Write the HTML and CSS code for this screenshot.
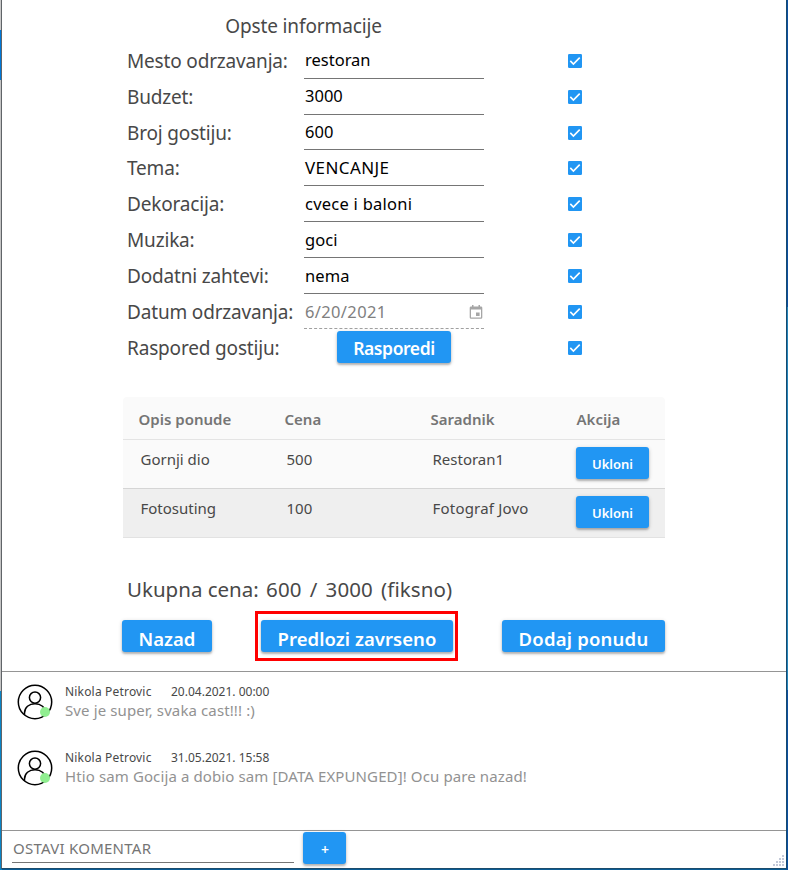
FILE: index.html
```html
<!DOCTYPE html>
<html lang="sr">
<head>
<meta charset="utf-8">
<title>Opste informacije</title>
<link rel="stylesheet" href="styles.css">
</head>
<body>
<svg class="defs" width="0" height="0">
  <symbol id="check" viewBox="0 0 14 14"><rect width="14" height="14" rx="1.2" fill="#2196f3"/><path d="M2.3 6.9 5.4 10 11.7 3.6" fill="none" stroke="#fff" stroke-width="1.6"/></symbol>
  <symbol id="person" viewBox="0 0 36 36"><g fill="none" stroke="#000" stroke-width="1.5"><circle cx="18" cy="18" r="16.7"/><circle cx="18" cy="13.6" r="5.600"/><path d="M7.500 30.800V29C7.500 23.500 12 19.700 18 19.700S28.500 23.500 28.500 29V30.800"/></g><circle cx="28" cy="28" r="5" fill="#90ee90"/></symbol>
</svg>
<div class="window">
  <section class="info">
    <h1 class="title">Opste informacije</h1>
    <div class="row"><label>Mesto odrzavanja:</label><span class="field">restoran</span><svg class="check"><use href="#check"/></svg></div>
    <div class="row"><label>Budzet:</label><span class="field">3000</span><svg class="check"><use href="#check"/></svg></div>
    <div class="row"><label>Broj gostiju:</label><span class="field">600</span><svg class="check"><use href="#check"/></svg></div>
    <div class="row"><label>Tema:</label><span class="field caps">VENCANJE</span><svg class="check"><use href="#check"/></svg></div>
    <div class="row"><label>Dekoracija:</label><span class="field decoration">cvece i baloni</span><svg class="check"><use href="#check"/></svg></div>
    <div class="row"><label>Muzika:</label><span class="field lower">goci</span><svg class="check"><use href="#check"/></svg></div>
    <div class="row"><label>Dodatni zahtevi:</label><span class="field lower">nema</span><svg class="check"><use href="#check"/></svg></div>
    <div class="row"><label>Datum odrzavanja:</label><span class="field date">6/20/2021<svg class="calendar" viewBox="0 0 14 14"><path fill="#a6a6a6" fill-rule="evenodd" d="M3 0h1.500v1.400h5V0H11v1.400h1q1.300 0 1.300 1.300v9.800q0 1.300-1.300 1.300H2Q.7 13.800.7 12.500V2.700Q.7 1.400 2 1.400h1zM2 4.600v7.900h10V4.600zM7 7.400h3.600V11H7z"/></svg></span><svg class="check"><use href="#check"/></svg></div>
    <div class="row"><label>Raspored gostiju:</label><button class="btn arrange">Rasporedi</button><svg class="check"><use href="#check"/></svg></div>
  </section>
  <section class="offers">
    <div class="offer head"><span>Opis ponude</span><span>Cena</span><span>Saradnik</span><span>Akcija</span></div>
    <div class="offer"><span>Gornji dio</span><span>500</span><span>Restoran1</span><button class="btn small">Ukloni</button></div>
    <div class="offer alt"><span>Fotosuting</span><span>100</span><span class="photographer">Fotograf Jovo</span><button class="btn small">Ukloni</button></div>
  </section>
  <p class="total">Ukupna cena: <span class="sum">600 / 3000 (fiksno)</span></p>
  <div class="actions">
    <button class="btn back">Nazad</button>
    <div class="highlight"><button class="btn">Predlozi zavrseno</button></div>
    <button class="btn add">Dodaj ponudu</button>
  </div>
  <section class="comments">
    <article class="comment"><svg class="avatar"><use href="#person"/></svg><div><div class="meta"><span class="name">Nikola Petrovic</span><span>20.04.2021. 00:00</span></div><p>Sve je super, svaka cast!!! :)</p></div></article>
    <article class="comment"><svg class="avatar"><use href="#person"/></svg><div><div class="meta"><span class="name">Nikola Petrovic</span><span>31.05.2021. 15:58</span></div><p>Htio sam Gocija a dobio sam [DATA EXPUNGED]! Ocu pare nazad!</p></div></article>
  </section>
  <footer class="reply"><span class="prompt">OSTAVI KOMENTAR</span><button class="btn plus">+</button>
    <svg class="grip" viewBox="0 0 12 12"><path fill="#c3c9d8" d="M9 0h2v2H9zM6 3h2v2H6zM9 3h2v2H9zM3 6h2v2H3zM6 6h2v2H6zM9 6h2v2H9zM0 9h2v2H0zM3 9h2v2H3zM6 9h2v2H6zM9 9h2v2H9z"/></svg>
  </footer>
</div>
</body>
</html>
```
FILE: styles.css
```css
* { box-sizing: border-box; }
body {
  margin: 0;
  height: 870px;
  overflow: hidden;
  padding: 0 1px 1px;
  font-family: "Noto Sans", sans-serif;
  color: #484848;
  background:
    linear-gradient(#c9c9c9 0 30px, #0078d7 30px 80px, #c4c4c4 80px 691px, #0a84c6 691px) 0 0 / 2px 870px no-repeat,
    linear-gradient(#0b4fa0 0 307px, #2484b8 307px 690px, #0b4fa0 690px) 100% 0 / 2px 870px no-repeat,
    #0b5c94;
}
.defs { position: absolute; }
h1, p { margin: 0; font-weight: 400; }
.window {
  height: 869px;
  background: #fff;
  border: 1px solid #606468;
  border-top: 0;
  border-right-color: #164a70;
  border-bottom-color: #1c4c6c;
}
.info { padding: 10px 0 0 125px; height: 397px; }
.title { width: 353px; height: 33px; line-height: 33px; font-size: 19px; letter-spacing: -.12px; text-align: center; }
.row { display: grid; grid-template-columns: 177px 264px 14px; grid-template-rows: 100%; height: 35.83px; }
label { font-size: 19px; line-height: 37.500px; letter-spacing: -.17px; white-space: nowrap; }
.field {
  position: relative;
  width: 180px;
  height: 100%;
  padding-left: 1px;
  border-bottom: 1px solid #757575;
  font-size: 16.5px;
  line-height: 34px;
  color: #000;
}
.caps { font-size: 17px; letter-spacing: .4px; line-height: 35px; }
.decoration { letter-spacing: .25px; line-height: 35px; }
.lower { line-height: 36px; letter-spacing: .1px; }
.date { height: 35px; color: #808080; border-bottom: 1px dashed #a0a0a0; letter-spacing: .35px; line-height: 36px; }
.calendar { position: absolute; right: 1px; top: 11px; width: 14px; height: 14px; }
.check { width: 14px; height: 14px; margin-top: 11px; }
.btn {
  height: 32px;
  padding: 0;
  border: 0;
  border-radius: 3px;
  background: #2196f3;
  color: #fff;
  font: 600 18.500px/37px "Noto Sans", sans-serif;
  white-space: nowrap;
  box-shadow: 0 2px 2px rgba(0,0,0,.22), 0 1px 4px rgba(0,0,0,.16);
}
.arrange { width: 114px; margin: 1px 0 0 33px; font-size: 17.500px; line-height: 35px; letter-spacing: -.4px; }
.offers { width: 542px; margin-left: 121px; border-radius: 4px 4px 0 0; overflow: hidden; background: #fafafa; }
.offer {
  display: grid;
  grid-template-columns: 146px 146px 143.500px 73px;
  height: 49px;
  padding-left: 17.500px;
  border-bottom: 1px solid #d5d5d5;
  font-size: 15px;
  line-height: 38px;
}
.head {
  grid-template-columns: repeat(4, 146px);
  height: 43px;
  padding-left: 15.500px;
  border-color: #e4e4e4;
  line-height: 45px;
  font-weight: 600;
  color: #757575;
}
.alt { background: #efefef; border-color: #e2e2e2; }
.photographer { letter-spacing: .2px; }
.small { margin-top: 7px; font-size: 13px; line-height: 34px; }
.total { height: 73px; padding: 33px 0 0 125px; font-size: 20.500px; line-height: 36px; }
.sum { margin-left: 2px; letter-spacing: .1px; word-spacing: 2.700px; }
.actions { display: flex; height: 60px; padding-left: 120px; }
.back { width: 90px; margin-top: 9px; }
.highlight { width: 203px; height: 50px; margin-left: 43px; padding: 6px 3px 0; border: 3px solid #f00; }
.highlight .btn { display: block; width: 192px; letter-spacing: .05px; }
.add { width: 163px; margin: 9px 0 0 44px; letter-spacing: .2px; }
.comments { height: 160px; padding: 11px 0 0 15px; border: solid #959595; border-width: 1px 0; }
.comment { display: flex; gap: 12px; height: 66px; }
.avatar { width: 36px; height: 36px; margin-top: 1px; }
.meta { display: flex; font-size: 12px; line-height: 17px; }
.name { width: 106px; letter-spacing: .18px; }
.comment p { color: #929292; font-size: 15px; line-height: 20px; letter-spacing: .11px; white-space: nowrap; }
.reply { position: relative; display: flex; padding: 1px 0 0 10px; height: 37px; }
.prompt { width: 282px; height: 31px; padding-left: 1px; border-bottom: 1px solid #757575; color: #757575; font-size: 15px; line-height: 33px; letter-spacing: .25px; }
.plus { width: 43px; margin-left: 9px; font-size: 14px; line-height: 36px; padding-left: 1px; }
.grip { position: absolute; right: 1px; bottom: 1px; width: 12px; height: 12px; }
```
